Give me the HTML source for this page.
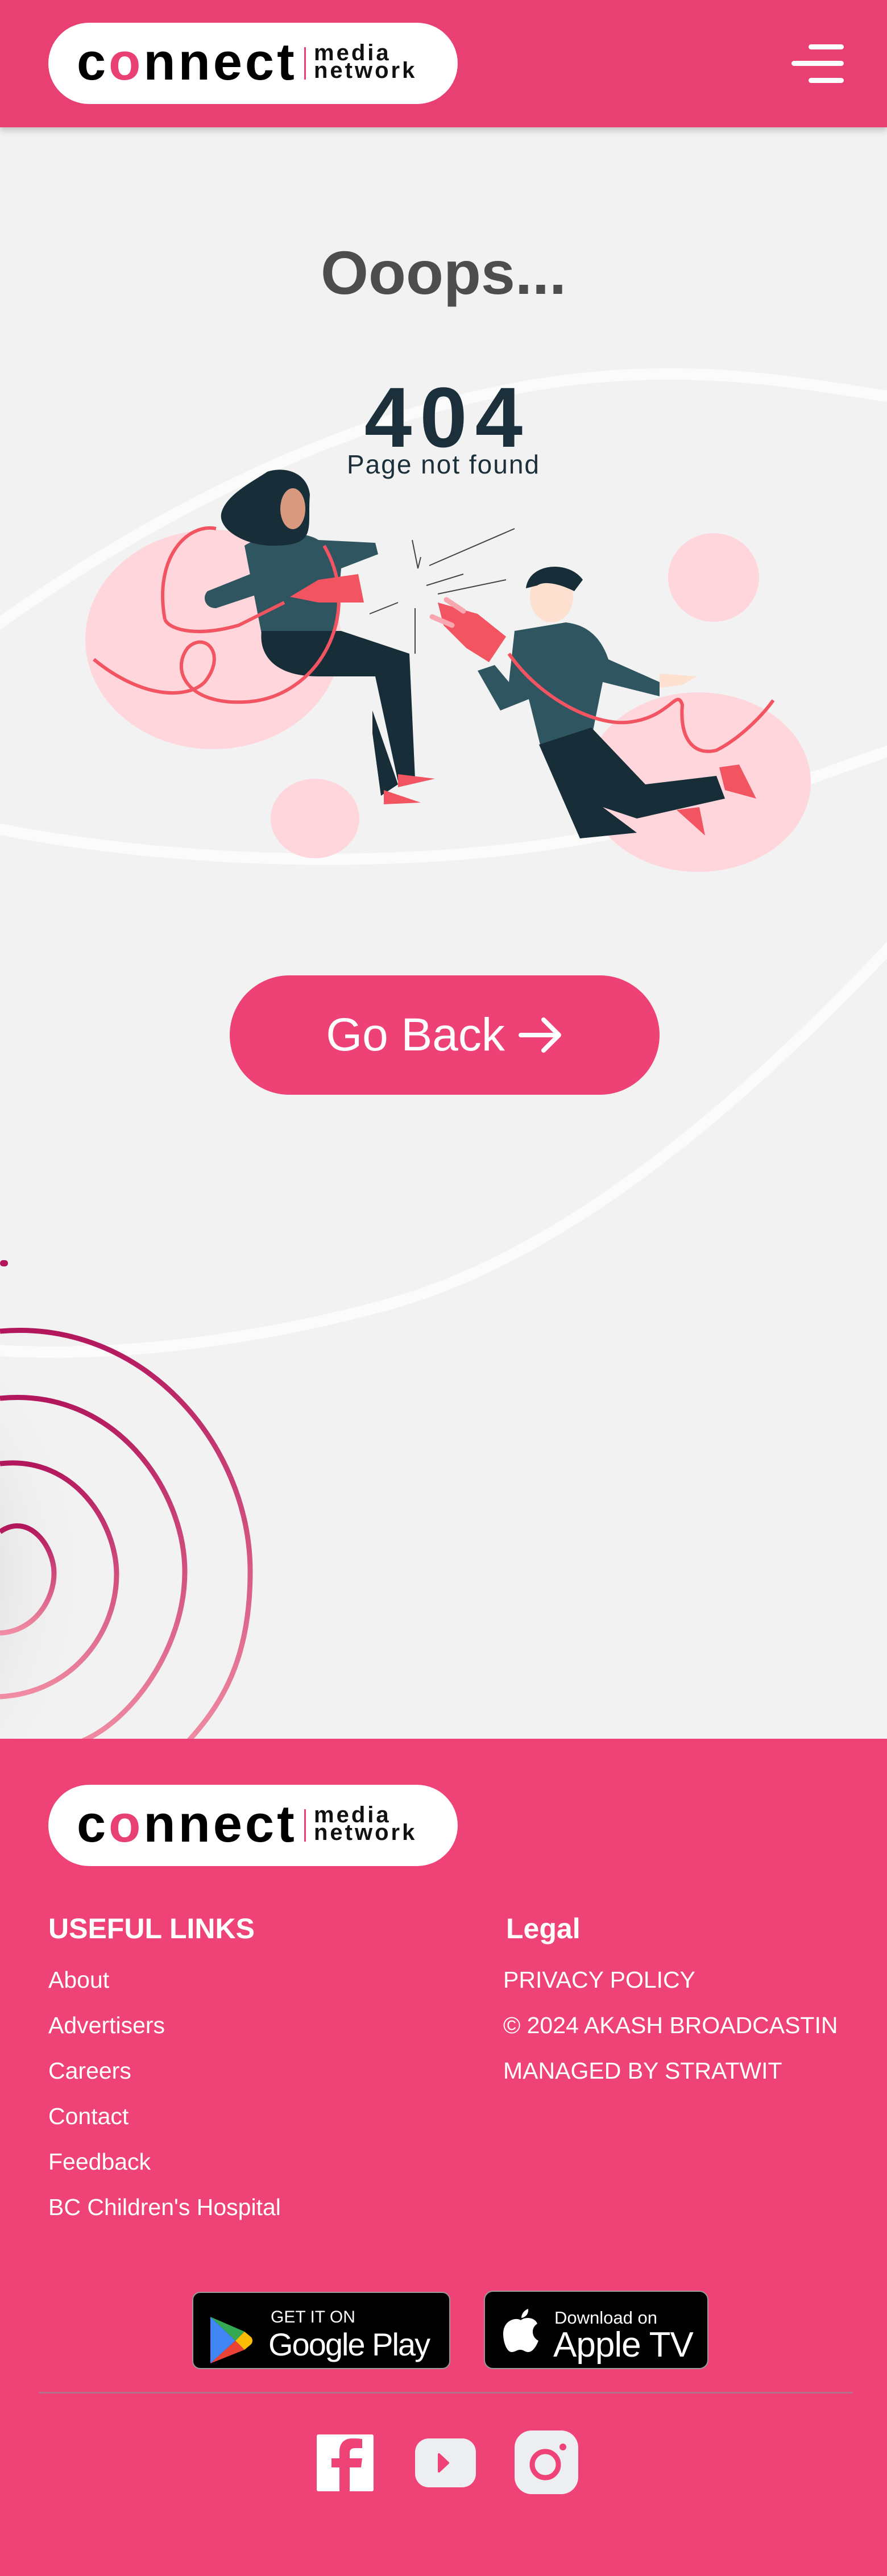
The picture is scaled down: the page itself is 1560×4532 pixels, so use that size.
<!DOCTYPE html>
<html><head><meta charset="utf-8"><style>
*{margin:0;padding:0;box-sizing:border-box}
body{width:1560px;height:4532px;position:relative;background:#f2f2f2;font-family:"Liberation Sans",sans-serif;overflow:hidden}
.abs{position:absolute}
header{position:absolute;left:0;top:0;width:1560px;height:224px;background:#e84072;box-shadow:0 6px 10px rgba(0,0,0,.18);z-index:3}
.pill{position:absolute;width:720px;height:143px;background:#fff;border-radius:72px}
.cn{position:absolute;left:50px;top:17px;font-size:92px;letter-spacing:5px;color:#000;font-weight:700}
.sep{position:absolute;left:450px;top:43px;width:3px;height:57px;background:#e84072}
.mn{position:absolute;left:467px;top:38px;font-size:40px;line-height:31px;font-weight:700;letter-spacing:4px;color:#111}
.hb{position:absolute;background:#fff;height:9px;border-radius:5px}
footer{position:absolute;left:0;top:3059px;width:1560px;height:1473px;background:#ef4377}
.fh{position:absolute;top:3364px;font-size:50px;font-weight:700;color:#fff}
.lk{position:absolute;font-size:41px;color:#fff;white-space:nowrap}
</style></head><body>
<svg class="abs" style="left:0;top:0" width="1560" height="3059" viewBox="0 0 1560 3059">
<defs><linearGradient id="sg" x1="0" y1="0" x2="0" y2="1"><stop offset="0" stop-color="#b2165c"/><stop offset="1" stop-color="#f08ca3"/></linearGradient>
<radialGradient id="sh" cx="0.05" cy="0.5" r="0.6"><stop offset="0.7" stop-color="#e6e6e6"/><stop offset="1" stop-color="#f2f2f2" stop-opacity="0"/></radialGradient></defs>
<g fill="none" stroke="#fbfbfb" stroke-width="20" stroke-linecap="round">
<path d="M-20 1110 C 300 880, 700 680, 1100 660 C 1300 650, 1440 680, 1580 700"/>
<path d="M-20 1455 C 300 1520, 700 1530, 1000 1480 C 1250 1440, 1420 1370, 1580 1315"/>
<path d="M1580 1650 C 1300 1950, 1000 2200, 700 2290 C 450 2360, 200 2390, -20 2375"/>
</g>
<ellipse cx="20" cy="2770" rx="500" ry="480" fill="url(#sh)"/>
<g fill="none" stroke="url(#sg)" stroke-width="9">
<path d="M0 2342 C 250 2320, 440 2540, 440 2765 C 440 2920, 390 3000, 325 3070"/>
<path d="M0 2460 C 200 2440, 325 2620, 325 2765 C 325 2900, 230 3030, 140 3065"/>
<path d="M0 2575 C 130 2560, 205 2680, 205 2770 C 205 2870, 130 2978, 0 2985"/>
<path d="M0 2695 C 50 2660, 95 2720, 95 2768 C 95 2815, 60 2870, 0 2873"/>
</g>
<rect x="0" y="2217" width="14" height="11" rx="5" fill="#b2165c"/>
<g fill="#ffd6dc">
<ellipse cx="375" cy="1125" rx="225" ry="193"/>
<ellipse cx="554" cy="1440" rx="78" ry="70"/>
<ellipse cx="1228" cy="1376" rx="198" ry="158"/>
<ellipse cx="1255" cy="1016" rx="80" ry="78"/>
</g>
<g>
<path d="M460 1110 C 470 1070, 480 1050, 470 1010 L 440 1010 L 365 1040 C 355 1050, 360 1070, 380 1070 L 470 1040 Z" fill="#2f5560"/>
<path d="M430 960 C 460 940, 530 930, 560 950 L 660 955 L 665 975 L 600 1000 L 590 1110 L 460 1115 Z" fill="#2f5560"/>
<path d="M460 1110 L 600 1110 L 720 1150 L 730 1370 L 700 1375 L 660 1190 L 560 1190 C 480 1190, 455 1150, 460 1110 Z" fill="#172e38"/>
<path d="M655 1250 L 700 1380 L 670 1400 L 655 1290 Z" fill="#172e38"/>
<path d="M700 1362 L 765 1370 L 700 1385 Z" fill="#f25461"/>
<path d="M675 1390 L 740 1412 L 675 1415 Z" fill="#f25461"/>
<ellipse cx="505" cy="895" rx="30" ry="42" fill="#d9997e"/>
<path d="M470 830 C 500 820, 540 830, 545 870 C 540 930, 560 960, 480 960 C 430 960, 380 930, 390 900 C 400 870, 440 850, 470 830 Z" fill="#172e38"/>
<ellipse cx="515" cy="895" rx="22" ry="36" fill="#d9997e"/>
<path d="M510 1050 L 560 1020 L 630 1010 L 640 1060 L 560 1060 Z" fill="#f25461"/>
<path d="M290 1090 C 270 980, 330 920, 380 930 M570 960 C 640 1080, 560 1230, 430 1235 C 330 1240, 300 1180, 330 1140 C 360 1110, 400 1150, 360 1200 C 330 1230, 250 1230, 165 1160 M290 1090 C 300 1110, 350 1120, 420 1100 L 500 1060" fill="none" stroke="#f25461" stroke-width="6"/>
</g>
<g>
<path d="M905 1110 L 995 1095 C 1040 1100, 1060 1130, 1070 1160 L 1160 1200 L 1160 1225 L 1060 1200 L 1040 1300 L 950 1310 L 930 1230 L 880 1250 L 840 1180 L 870 1170 L 895 1200 Z" fill="#2f5560"/>
<path d="M948 1310 L 1040 1280 L 1135 1380 L 1260 1365 L 1275 1405 L 1120 1440 L 1060 1420 L 1120 1465 L 1020 1475 Z" fill="#172e38"/>
<path d="M1265 1350 L 1300 1345 L 1330 1405 L 1275 1390 Z" fill="#f25461"/>
<path d="M1190 1425 L 1230 1420 L 1240 1470 Z" fill="#f25461"/>
<ellipse cx="970" cy="1050" rx="38" ry="45" fill="#fde0cf"/>
<path d="M925 1035 C 930 990, 1000 985, 1025 1020 L 1010 1040 C 990 1030, 960 1020, 945 1030 Z" fill="#172e38"/>
<path d="M1160 1185 L 1225 1190 L 1200 1205 L 1160 1210 Z" fill="#fde0cf"/>
<path d="M770 1060 L 840 1080 L 890 1120 L 860 1165 L 820 1140 L 780 1100 Z" fill="#f25461"/>
<path d="M760 1085 L 795 1100 M785 1055 L 815 1075" stroke="#f8a6b0" stroke-width="9" stroke-linecap="round"/>
<path d="M895 1150 C 950 1230, 1050 1280, 1110 1270 C 1180 1260, 1190 1210, 1200 1240 C 1195 1300, 1220 1330, 1260 1320 C 1300 1300, 1340 1260, 1360 1232" fill="none" stroke="#f25461" stroke-width="6"/>
<path d="M725 950 L 735 1000 L 740 980 M755 995 L 905 930 M750 1030 L 815 1010 M770 1045 L 890 1020 M700 1060 L 650 1080 M730 1070 L 730 1150" stroke="#444" stroke-width="2" fill="none"/>
</g>
</svg>
<header>
<div class="pill" style="left:85px;top:40px">
<div class="cn">c<span style="color:#e84072">o</span>nnect</div><div class="sep"></div>
<div class="mn">media<br>network</div></div>
<div class="hb" style="left:1422px;top:78px;width:62px"></div>
<div class="hb" style="left:1392px;top:107px;width:92px"></div>
<div class="hb" style="left:1422px;top:137px;width:62px"></div>
</header>
<div class="abs" style="left:0;width:1560px;top:417px;text-align:center;font-size:108px;font-weight:700;color:#4d4d4d">Ooops...</div>
<div class="abs" style="left:0;width:1560px;top:648px;text-align:center;font-size:150px;font-weight:700;color:#1b303a;letter-spacing:14px;padding-left:14px">404</div>
<div class="abs" style="left:0;width:1560px;top:790px;text-align:center;font-size:46px;color:#1b303a;letter-spacing:2px">Page not found</div>
<div class="abs" style="left:404px;top:1716px;width:756px;height:210px;border-radius:105px;background:#ee4277;color:#fff;font-size:82px;text-align:center;line-height:210px">Go Back <svg width="80" height="66" viewBox="0 0 80 66" style="vertical-align:-6px"><path d="M5 33 H72 M45 6 L72 33 L45 60" stroke="#fff" stroke-width="8" fill="none" stroke-linecap="round" stroke-linejoin="round"/></svg></div>
<footer></footer>
<div class="pill" style="left:85px;top:3140px"><div class="cn">c<span style="color:#e84072">o</span>nnect</div><div class="sep"></div><div class="mn">media<br>network</div></div>
<div class="fh" style="left:85px">USEFUL LINKS</div>
<div class="fh" style="left:890px">Legal</div>
<div class="lk" style="left:85px;top:3460px">About</div>
<div class="lk" style="left:85px;top:3540px">Advertisers</div>
<div class="lk" style="left:85px;top:3620px">Careers</div>
<div class="lk" style="left:85px;top:3700px">Contact</div>
<div class="lk" style="left:85px;top:3780px">Feedback</div>
<div class="lk" style="left:85px;top:3860px">BC Children's Hospital</div>
<div class="lk" style="left:885px;top:3460px">PRIVACY POLICY</div>
<div class="lk" style="left:885px;top:3540px;width:590px;overflow:hidden">© 2024 AKASH BROADCASTING</div>
<div class="lk" style="left:885px;top:3620px">MANAGED BY STRATWIT</div>
<div class="abs" style="left:338px;top:4032px;width:454px;height:136px;background:#000;border:2px solid #999;border-radius:14px;color:#fff">
<svg class="abs" style="left:26px;top:38px" width="78" height="88" viewBox="0 0 78 88"><path d="M4 4 L48 46 L4 86 Z" fill="#4285f4"/><path d="M4 4 L48 46 L64 30 Z" fill="#34a853"/><path d="M4 86 L48 46 L64 62 Z" fill="#ea4335"/><path d="M48 46 L64 30 L76 40 Q80 46 76 52 L64 62 Z" fill="#fbbc04"/></svg>
<div class="abs" style="left:136px;top:26px;font-size:30px">GET IT ON</div>
<div class="abs" style="left:132px;top:58px;font-size:56px;letter-spacing:-2px">Google Play</div></div>
<div class="abs" style="left:851px;top:4030px;width:395px;height:138px;background:#000;border:2px solid #999;border-radius:16px;color:#fff">
<svg class="abs" style="left:32px;top:30px" width="62" height="76" viewBox="0 0 62 76"><path d="M31 20 C 38 14, 55 14, 60 26 C 48 34, 50 50, 62 56 C 58 66, 52 76, 44 76 C 38 76, 36 72, 30 72 C 24 72, 21 76, 15 76 C 6 76, 0 58, 0 44 C 0 20, 22 14, 31 20 Z M32 16 C 32 8, 38 2, 44 0 C 45 8, 40 15, 32 16 Z" fill="#fff"/></svg>
<div class="abs" style="left:122px;top:28px;font-size:31px">Download on</div>
<div class="abs" style="left:120px;top:58px;font-size:62px;letter-spacing:-1px">Apple TV</div></div>
<div class="abs" style="left:68px;top:4208px;width:1432px;height:3px;background:#b7708a"></div>
<svg class="abs" style="left:557px;top:4283px" width="100" height="100" viewBox="0 0 100 100"><rect width="100" height="100" rx="3" fill="#fff"/><path d="M58 100 V58 H78 L80 42 H58 V32 C58 26, 62 24, 68 24 H80 V8 C74 7, 68 7, 62 7 C48 7, 40 16, 40 30 V42 H26 V58 H40 V100 Z" fill="#ef4377"/></svg>
<svg class="abs" style="left:730px;top:4290px" width="107" height="86" viewBox="0 0 107 86"><rect width="107" height="86" rx="24" fill="#eceef2"/><path d="M42 28 L42 58 L58 43 Z" fill="#ef4377" stroke="#ef4377" stroke-width="4" stroke-linejoin="round"/></svg>
<svg class="abs" style="left:905px;top:4276px" width="112" height="112" viewBox="0 0 112 112"><rect width="112" height="112" rx="30" fill="#eceef2"/><circle cx="54" cy="60" r="23" fill="none" stroke="#ef4377" stroke-width="9"/><circle cx="85" cy="29" r="6" fill="#ef4377"/></svg>
</body></html>
